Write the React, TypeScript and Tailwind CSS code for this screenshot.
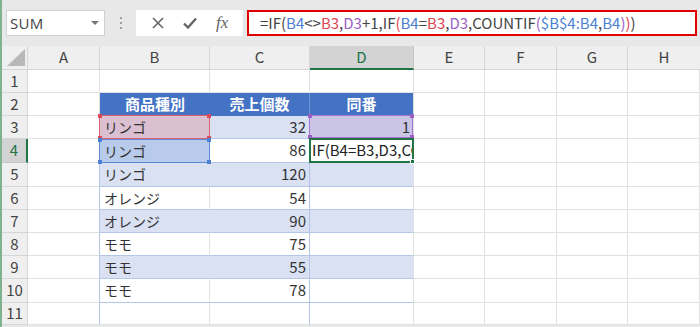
import React from "react";

const FONT = { fontFamily: '"Noto Sans CJK JP", "Noto Sans", sans-serif' };

const formula: [string, string][] = [
  ["=IF(", "text-[#444]"],
  ["B4", "text-[#4a7fd4]"],
  ["<>", "text-[#444]"],
  ["B3", "text-[#dc4450]"],
  [",", "text-[#444]"],
  ["D3", "text-[#9a5fc4]"],
  ["+1,IF", "text-[#444]"],
  ["(", "text-[#dc4450]"],
  ["B4", "text-[#4a7fd4]"],
  ["=", "text-[#444]"],
  ["B3", "text-[#dc4450]"],
  [",", "text-[#444]"],
  ["D3", "text-[#9a5fc4]"],
  [",COUNTIF", "text-[#444]"],
  ["(", "text-[#9a5fc4]"],
  ["$B$4:B4", "text-[#4a7fd4]"],
  [",", "text-[#444]"],
  ["B4", "text-[#4a7fd4]"],
  [")", "text-[#9a5fc4]"],
  [")", "text-[#dc4450]"],
  [")", "text-[#444]"],
];

function Handles({ color }: { color: string }) {
  return (
    <>
      <span className={`absolute -left-[2px] -top-[2px] w-[4px] h-[4px] ${color}`} />
      <span className={`absolute -right-[2px] -top-[2px] w-[4px] h-[4px] ${color}`} />
      <span className={`absolute -left-[2px] -bottom-[2px] w-[4px] h-[4px] ${color}`} />
      <span className={`absolute -right-[2px] -bottom-[2px] w-[4px] h-[4px] ${color}`} />
    </>
  );
}

const rowHeader = "flex items-center justify-center bg-[#efefef] border-r border-b border-[#d6d6d6] text-[15px] text-[#444]";
const gray = "border-r border-b border-[#e1e1e1] bg-white";
const aBlue = "border-r border-b border-[#e1e1e1] border-r-[#b4c6e7] bg-white";
const txt = "flex items-center pl-[4px] text-[14px] text-[#333] whitespace-nowrap";
const num = "flex items-center justify-end pr-[3px] text-[15px] text-[#333]";

type Row = { n: number; b: string; c: string; band: boolean };

const rows: Row[] = [
  { n: 5, b: "リンゴ", c: "120", band: true },
  { n: 6, b: "オレンジ", c: "54", band: false },
  { n: 7, b: "オレンジ", c: "90", band: true },
  { n: 8, b: "モモ", c: "75", band: false },
  { n: 9, b: "モモ", c: "55", band: true },
  { n: 10, b: "モモ", c: "78", band: false },
];

function Blanks() {
  return (
    <>
      <div className={gray} />
      <div className={gray} />
      <div className={gray} />
      <div className={gray} />
    </>
  );
}

export default function App() {
  return (
    <div className="w-[700px] h-[327px] overflow-hidden bg-[#e8e8e8] border-l-2 border-[#7fb28f] flex flex-col" style={FONT}>
      {/* toolbar */}
      <div className="h-[46px] shrink-0 flex items-center pl-[4px] pr-[3px]">
        <div className="w-[99px] h-[26px] bg-white border border-[#d0d0d0] flex items-center justify-between pl-[3px] pr-[5px]">
          <span className="text-[15px] text-[#444] tracking-[0.3px]" style={{ fontFamily: '"Open Sans", "Noto Sans", sans-serif' }}>SUM</span>
          <span className="w-0 h-0 border-l-[4px] border-r-[4px] border-t-[4px] border-l-transparent border-r-transparent border-t-[#777]" />
        </div>
        <div className="w-[31px] flex flex-col items-center gap-[3px]">
          <span className="w-[2px] h-[2px] bg-[#a0a0a0]" />
          <span className="w-[2px] h-[2px] bg-[#a0a0a0]" />
          <span className="w-[2px] h-[2px] bg-[#a0a0a0]" />
        </div>
        <div className="w-[107px] h-[26px] bg-white flex items-center justify-around px-[6px]">
          <svg width="14" height="14" viewBox="0 0 14 14"><path d="M2 2 L12 12 M12 2 L2 12" stroke="#666" strokeWidth="1.6" /></svg>
          <svg width="16" height="14" viewBox="0 0 16 14"><path d="M2 7.5 L6 11.5 L14 2.5" stroke="#666" strokeWidth="2.4" fill="none" /></svg>
          <span className="text-[17px] italic text-[#666]" style={{ fontFamily: '"Liberation Serif", serif' }}>fx</span>
        </div>
        <div className="ml-[4px] flex-1 h-[26px] bg-white border-2 border-[#e00000] flex items-center pl-[11px] text-[15px] whitespace-nowrap">
          {formula.map(([t, c], i) => (
            <span key={i} className={c}>{t}</span>
          ))}
        </div>
      </div>

      {/* grid */}
      <div className="grid grid-cols-[26px_72px_110px_100px_104px_71px_72px_71px_72px] grid-rows-[24px_23px_23px_23px_24px_24px_23px_23px_23px_23px_24px_22px] bg-white">
        {/* column headers */}
        <div className="relative bg-[#efefef] border-r border-b border-[#d6d6d6]">
          <svg className="absolute right-[2px] bottom-[3px]" width="18" height="17" viewBox="0 0 18 17"><polygon points="18,0 18,17 0,17" fill="#b8b8b8" /></svg>
        </div>
        <div className="flex items-center justify-center bg-[#efefef] border-r border-b border-[#d6d6d6] text-[15px] text-[#444]">A</div>
        <div className="flex items-center justify-center bg-[#efefef] border-r border-b border-[#d6d6d6] text-[15px] text-[#444]">B</div>
        <div className="flex items-center justify-center bg-[#efefef] border-r border-b border-[#d6d6d6] text-[15px] text-[#444]">C</div>
        <div className="flex items-center justify-center bg-[#d3d3d3] border-r border-[#c6c6c6] border-b-2 border-b-[#217346] text-[15px] text-[#217346]">D</div>
        <div className="flex items-center justify-center bg-[#efefef] border-r border-b border-[#d6d6d6] text-[15px] text-[#444]">E</div>
        <div className="flex items-center justify-center bg-[#efefef] border-r border-b border-[#d6d6d6] text-[15px] text-[#444]">F</div>
        <div className="flex items-center justify-center bg-[#efefef] border-r border-b border-[#d6d6d6] text-[15px] text-[#444]">G</div>
        <div className="flex items-center justify-center bg-[#efefef] border-b border-[#d6d6d6] text-[15px] text-[#444]">H</div>

        {/* row 1 */}
        <div className={rowHeader}>1</div>
        <div className={gray} />
        <div className={gray} />
        <div className={gray} />
        <div className={gray} />
        <Blanks />

        {/* row 2 */}
        <div className={rowHeader}>2</div>
        <div className={gray} />
        <div className="flex items-center justify-center bg-[#4472c4] border-b border-[#4472c4] text-[15px] font-bold text-white">商品種別</div>
        <div className="flex items-center justify-center bg-[#4472c4] border-r border-b border-[#4472c4] border-r-[#6f92d2] text-[15px] font-bold text-white">売上個数</div>
        <div className="flex items-center justify-center bg-[#4472c4] border-r border-b border-[#4472c4] border-r-[#e1e1e1] text-[15px] font-bold text-white">同番</div>
        <Blanks />

        {/* row 3 */}
        <div className={rowHeader}>3</div>
        <div className={aBlue} />
        <div className={`relative bg-[#dac0d1] ${txt}`}>
          <span>リンゴ</span>
          <span className="absolute -left-px -top-px right-0 bottom-0 border border-[#e06070] z-10">
            <Handles color="bg-[#d94a5a]" />
          </span>
        </div>
        <div className={`bg-[#d9e1f2] border-r border-b border-[#b4c6e7] ${num}`}>32</div>
        <div className={`relative bg-[#cbc5e5] border-r border-b border-[#e1e1e1] border-b-[#b4c6e7] ${num}`}>
          <span>1</span>
          <span className="absolute -left-px -top-px right-0 bottom-0 border border-[#a374d4] z-10">
            <Handles color="bg-[#9a5fc4]" />
          </span>
        </div>
        <Blanks />

        {/* row 4 */}
        <div className="flex items-center justify-center bg-[#d3d3d3] border-b border-[#c6c6c6] border-r-2 border-r-[#217346] text-[15px] text-[#217346]">4</div>
        <div className={aBlue} />
        <div className={`relative bg-[#b8cbea] ${txt}`}>
          <span>リンゴ</span>
          <span className="absolute -left-px top-0 right-0 bottom-0 border border-[#5b8ad6] z-10">
            <Handles color="bg-[#4a7fd4]" />
          </span>
        </div>
        <div className={`bg-white border-r border-b border-[#b4c6e7] ${num}`}>86</div>
        <div className="relative bg-white border-r border-b border-[#e1e1e1]">
          <div className="absolute inset-0 overflow-hidden flex items-center pl-[2px] text-[15px] text-[#222] whitespace-nowrap">IF(B4=B3,D3,COUNTIF($B$4:B4,B4)))</div>
          <span className="absolute -left-px -top-px -right-px -bottom-px border-2 border-[#217346] z-10">
            <span className="absolute -right-[3px] -bottom-[3px] w-[5px] h-[5px] bg-[#217346] border border-white" />
          </span>
        </div>
        <Blanks />

        {/* rows 5-10 */}
        {rows.map((r) => (
          <React.Fragment key={r.n}>
            <div className={rowHeader}>{r.n}</div>
            <div className={aBlue} />
            {r.band ? (
              <div className={`bg-[#d9e1f2] border-r border-b border-[#d9e1f2] border-b-[#b4c6e7] ${txt}`}>{r.b}</div>
            ) : (
              <div className={`bg-white border-r border-b border-[#e1e1e1] border-b-[#b4c6e7] ${txt}`}>{r.b}</div>
            )}
            {r.band ? (
              <div className={`bg-[#d9e1f2] border-r border-b border-[#b4c6e7] ${num}`}>{r.c}</div>
            ) : (
              <div className={`bg-white border-r border-b border-[#b4c6e7] ${num}`}>{r.c}</div>
            )}
            {r.band ? (
              <div className="bg-[#d9e1f2] border-r border-b border-[#e1e1e1] border-b-[#b4c6e7]" />
            ) : (
              <div className="bg-white border-r border-b border-[#e1e1e1] border-b-[#b4c6e7]" />
            )}
            <Blanks />
          </React.Fragment>
        ))}

        {/* row 11 */}
        <div className={rowHeader}>11</div>
        <div className={aBlue} />
        <div className={gray} />
        <div className="border-r border-b border-[#e1e1e1] border-r-[#b4c6e7] bg-white" />
        <div className={gray} />
        <Blanks />
      </div>
    </div>
  );
}
